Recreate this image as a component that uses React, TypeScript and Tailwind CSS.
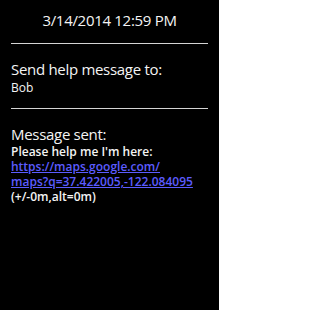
export default function App() {
  return (
    <div
      className="w-[219px] h-[310px] bg-black text-[#f4f4f4] overflow-hidden"
      style={{ fontFamily: '"Open Sans", "Noto Sans", sans-serif' }}
    >
      <div className="pt-[10px] text-center text-[15px] leading-[20px] tracking-[-0.3px]">
        3/14/2014 12:59 PM
      </div>
      <div className="mx-[11px] mt-[13px] h-px bg-[#d4d4d4]" />
      <div className="px-[11px] pt-[15px]">
        <div className="text-[15px] leading-[20px] tracking-[-0.3px]">
          Send help message to:
        </div>
        <div className="mt-[1px] text-[12px] leading-[16px]">Bob</div>
      </div>
      <div className="mx-[11px] mt-[12px] h-px bg-[#d4d4d4]" />
      <div className="px-[11px] pt-[15px]">
        <div className="text-[15px] leading-[20px] tracking-[-0.3px]">
          Message sent:
        </div>
        <div className="text-[12px] leading-[15px] font-semibold">
          <div>Please help me I'm here:</div>
          <a href="#" className="block text-[#5c5cff] underline">
            https://maps.google.com/
            <br />
            maps?q=37.422005,-122.084095
          </a>
          <div>(+/-0m,alt=0m)</div>
        </div>
      </div>
    </div>
  );
}
